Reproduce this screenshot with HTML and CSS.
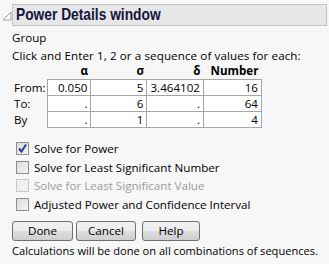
FILE: index.html
```html
<!DOCTYPE html>
<html lang="en">
<head>
  <meta charset="UTF-8">
  <title>Power Details window</title>
  <link rel="stylesheet" href="styles.css">
</head>
<body>
  <div class="head">
    <svg class="toggle" width="10" height="10" viewBox="0 0 10 10"><path d="M9 1 L9 9 L1 9 Z" fill="#fff" stroke="#9a9a9a"/></svg>
    <div class="title"><span>Power Details window</span></div>
  </div>

  <div class="panel">
    <div class="line">Group</div>
    <div class="line">Click and Enter 1, 2 or a sequence of values for each:</div>

    <table class="grid">
      <tr class="hdr"><td class="lbl"></td><th>α</th><th>σ</th><th>δ</th><th>Number</th></tr>
      <tr><td class="lbl">From:</td><td class="c">0.050</td><td class="c">5</td><td class="c">3.464102</td><td class="c">16</td></tr>
      <tr><td class="lbl">To:</td><td class="c">.</td><td class="c">6</td><td class="c">.</td><td class="c">64</td></tr>
      <tr><td class="lbl">By</td><td class="c">.</td><td class="c">1</td><td class="c">.</td><td class="c">4</td></tr>
    </table>

    <div class="checks">
      <div class="chk"><span class="box"><svg width="11" height="11" viewBox="0 0 11 11"><path d="M2 5.5 L4.5 8.5 L9 1.5" fill="none" stroke="#24408f" stroke-width="2"/></svg></span>Solve for Power</div>
      <div class="chk"><span class="box"></span>Solve for Least Significant Number</div>
      <div class="chk off"><span class="box"></span>Solve for Least Significant Value</div>
      <div class="chk"><span class="box"></span>Adjusted Power and Confidence Interval</div>
    </div>

    <div class="buttons">
      <button class="done">Done</button>
      <button class="cancel">Cancel</button>
      <button class="help">Help</button>
    </div>

    <div class="note">Calculations will be done on all combinations of sequences.</div>
  </div>
</body>
</html>
```

FILE: styles.css
```css
body { margin: 0; background: #f7f7f7; font-family: "Open Sans", "DejaVu Sans", sans-serif; font-size: 11.6px; color: #000; }
.head { display: flex; align-items: center; padding: 4px 2px 0 2px; }
.toggle { margin-top: 2px; flex: none; }
.title {
  flex: 1; height: 20px; line-height: 20px;
  padding-left: 3px; white-space: nowrap;
  background: #e7e7e7; border: 1px solid #c4c4c4;
  font-family: "Liberation Sans", Arial, sans-serif; font-weight: bold; font-size: 17px; color: #14143c;
}
.title span { display: inline-block; transform: scaleX(0.81); transform-origin: left center; }
.panel { padding-left: 12px; }
.line { height: 18px; line-height: 18px; white-space: nowrap; }
.line:nth-child(2) { letter-spacing: 0.1px; }
.panel .line:first-child { margin-top: 3px; }
.grid { border-collapse: collapse; margin-top: -1px; }
.grid td, .grid th { padding: 0 3px; height: 15px; line-height: 15px; }
.grid th { font-weight: bold; text-align: right; height: 10px; line-height: 10px; padding-bottom: 0; }
.grid .lbl { width: 30px; padding: 0 2px; text-align: left; }
.grid .c { border: 1px solid #a6a6a6; background: #fff; text-align: right; }
.grid td:nth-child(2) { width: 36px; }
.grid td:nth-child(3) { width: 49px; }
.grid td:nth-child(4) { width: 47px; }
.grid td:nth-child(5) { width: 51px; }
.checks { margin-top: 12px; margin-left: 4px; }
.chk { display: flex; align-items: center; height: 18.6px; white-space: nowrap; }
.box {
  width: 11px; height: 11px; margin-right: 5px;
  border: 1px solid #8e8e8e; background: linear-gradient(135deg, #dcdcdc, #f4f4f4);
  display: flex; align-items: center; justify-content: center;
}
.chk.off { color: #9c9c9c; }
.chk.off .box { border-color: #c8c8c8; background: #f0f0f0; }
.buttons { display: flex; gap: 3px; margin-top: 7px; }
button {
  height: 20px; padding: 0; font: inherit; color: #000;
  border: 1px solid #707070; border-radius: 3px;
  background: linear-gradient(#f2f2f2 0%, #ebebeb 50%, #dddddd 51%, #cfcfcf 100%);
}
.done { width: 61px; }
.cancel { width: 60px; }
.help { width: 58px; margin-left: 3px; }
.note { margin-top: 1px; height: 18px; line-height: 18px; white-space: nowrap; font-size: 11.1px; }
```
